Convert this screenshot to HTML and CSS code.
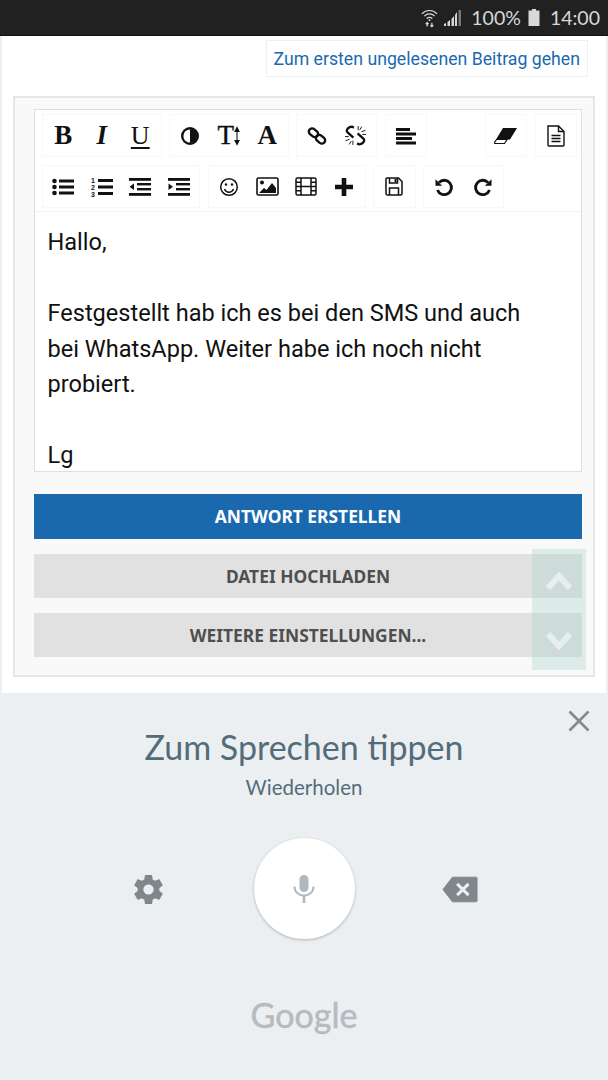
FILE: index.html
```html
<!DOCTYPE html>
<html lang="de">
<head>
    <meta charset="UTF-8">
    <meta name="viewport" content="width=device-width, initial-scale=1.0">
    <title>Antwort erstellen</title>
    <link rel="stylesheet" href="styles.css">
</head>
<body>
    <div class="status-bar">
        <svg class="wifi-icon" width="17" height="20" viewBox="0 0 18 20" fill="none" stroke="#d8d8d8" stroke-width="1.3">
            <path d="M1 5.5c4.5-4.6 11.5-4.6 16 0"/>
            <path d="M3.5 8c3.2-3 7.8-3 11 0"/>
            <path d="M6 10.5c1.8-1.5 4.2-1.5 6 0"/>
            <circle cx="9" cy="12.3" r="1" fill="#d8d8d8" stroke="none"/>
            <path d="M6.5 19v-4M5 16.3l1.5-1.5 1.5 1.500M11.5 15v4M10 17.7l1.5 1.5 1.5-1.5"/>
        </svg>
        <svg class="signal-icon" width="17" height="16" viewBox="0 0 17 16" fill="#d8d8d8">
            <path d="M0 16v-2l2-1v3z"/>
            <path d="M3.5 16v-4l2.5-2v6z"/>
            <path d="M7.5 16V9l2.5-3v10z"/>
            <path d="M11 16V5l2-3v14z"/>
            <rect x="14.5" y="0" width="2.5" height="16" fill="#777"/>
        </svg>
        <span class="status-battery-text">100%</span>
        <svg class="battery-icon" width="12" height="17" viewBox="0 0 11 17" fill="#d8d8d8">
            <path d="M3.5 0h4v1.5H11V17H0V1.5h3.5z"/>
        </svg>
        <span class="status-time">14:00</span>
    </div>

    <div class="page">
        <div class="first-unread">
            <a class="first-unread-link">Zum ersten ungelesenen Beitrag gehen</a>
        </div>

        <div class="reply-panel">
            <div class="editor">
                <div class="toolbar">
                    <div class="toolbar-row">
                        <div class="tool-group">
                            <span class="tool tool-letter bold">B</span>
                            <span class="tool tool-letter italic">I</span>
                            <span class="tool tool-letter underline">U</span>
                        </div>
                        <div class="tool-group">
                            <span class="tool">
                                <svg width="20" height="20" viewBox="0 0 20 20"><circle cx="10" cy="10" r="7.8" fill="none" stroke="#111" stroke-width="2.4"/><path d="M10 3a7 7 0 0 1 0 14z" fill="#111"/></svg>
                            </span>
                            <span class="tool tool-letter size-letter">T<svg width="6" height="20" viewBox="0 0 6 20" fill="none" stroke="#111" stroke-width="1.1"><path d="M3 3v14"/><path d="M1 5.5L3 1.5 5 5.5zM1 14.5L3 18.5 5 14.5z" fill="#111"/></svg></span>
                            <span class="tool tool-letter bold">A</span>
                        </div>
                        <div class="tool-group">
                            <span class="tool">
                                <svg width="20" height="20" viewBox="0 0 20 20" fill="none" stroke="#111" stroke-width="2.4"><rect x="1.5" y="3.5" width="10" height="6.5" rx="3.2" transform="rotate(40 6.5 6.7)"/><rect x="8.5" y="10" width="10" height="6.5" rx="3.2" transform="rotate(40 13.5 13.3)"/></svg>
                            </span>
                            <span class="tool">
                                <svg width="21" height="21" viewBox="0 0 20 20" fill="none" stroke="#111" stroke-width="2.2"><path d="M8.5 2.5L6.5 1.5Q4.5 1.5 2.5 3.5 1 5.5 2.5 7L8 12"/><path d="M12 8L17.5 13Q19 14.5 17.5 16.5 15.5 18.5 13.5 18.5L11.5 17.5"/><path stroke-width="0.9" d="M12.5 1v4M16 1.5l-2 3.2M19.5 5l-3.800 1.500M20 9h-3.500M0 11h3.500M.5 15l3.800-1.500M4 18.500l2-3.200M7.500 19v-4"/></svg>
                            </span>
                        </div>
                        <div class="tool-group">
                            <span class="tool">
                                <svg width="22" height="20" viewBox="0 0 22 20" fill="#111"><rect x="1" y="2" width="14" height="3"/><rect x="1" y="6.5" width="20" height="3"/><rect x="1" y="11" width="16" height="3"/><rect x="1" y="15.5" width="20" height="3"/></svg>
                            </span>
                        </div>
                        <div class="tool-group push-right">
                            <span class="tool">
                                <svg width="24" height="18" viewBox="0 0 24 18"><path d="M9 1h14l-7 11.5H2z" fill="#111"/><path d="M2.6 12.5h10.500L10.500 16.500H1.200c-.8 0-1-.6-.6-1.200z" fill="#fff" stroke="#111" stroke-width="1.2"/></svg>
                            </span>
                        </div>
                        <div class="tool-group">
                            <span class="tool">
                                <svg width="18" height="22" viewBox="0 0 18 22" fill="none" stroke="#111" stroke-width="1.4"><path d="M1 1h10.5L17 6.5V20c0 .6-.4 1-1 1H2c-.6 0-1-.4-1-1z"/><path d="M11.5 1v5.5H17M4.5 10.5h9M4.5 13.5h9M4.5 16.5h9"/></svg>
                            </span>
                        </div>
                    </div>
                    <div class="toolbar-row">
                        <div class="tool-group">
                            <span class="tool">
                                <svg width="22" height="18" viewBox="0 0 22 18" fill="#111"><circle cx="2.5" cy="3" r="2.3"/><circle cx="2.5" cy="9" r="2.3"/><circle cx="2.5" cy="15" r="2.3"/><rect x="7" y="1.5" width="15" height="3"/><rect x="7" y="7.5" width="15" height="3"/><rect x="7" y="13.5" width="15" height="3"/></svg>
                            </span>
                            <span class="tool">
                                <svg width="22" height="20" viewBox="0 0 22 20" fill="#111"><text class="list-digit" x="0" y="6">1</text><text class="list-digit" x="0" y="13">2</text><text class="list-digit" x="0" y="20">3</text><rect x="7" y="2" width="15" height="3"/><rect x="7" y="8.5" width="15" height="3"/><rect x="7" y="15" width="15" height="3"/></svg>
                            </span>
                            <span class="tool">
                                <svg width="22" height="18" viewBox="0 0 22 18" fill="#111"><rect x="0" y="0" width="22" height="2.8"/><rect x="8" y="5" width="14" height="2.4"/><rect x="8" y="10" width="14" height="2.4"/><rect x="0" y="15" width="22" height="2.8"/><path d="M5 5.5V12L.5 8.8z"/></svg>
                            </span>
                            <span class="tool">
                                <svg width="22" height="18" viewBox="0 0 22 18" fill="#111"><rect x="0" y="0" width="22" height="2.8"/><rect x="8" y="5" width="14" height="2.4"/><rect x="8" y="10" width="14" height="2.4"/><rect x="0" y="15" width="22" height="2.8"/><path d="M.5 5.5V12L5 8.8z"/></svg>
                            </span>
                        </div>
                        <div class="tool-group">
                            <span class="tool">
                                <svg width="20" height="20" viewBox="0 0 20 20" fill="none" stroke="#111" stroke-width="1.5"><circle cx="10" cy="10" r="8.3"/><path d="M5.5 12c1 2.3 2.7 3.3 4.5 3.3s3.500-1 4.500-3.300"/><circle cx="7" cy="7.5" r="1.2" fill="#111" stroke="none"/><circle cx="13" cy="7.5" r="1.2" fill="#111" stroke="none"/></svg>
                            </span>
                            <span class="tool">
                                <svg width="23" height="19" viewBox="0 0 23 19"><rect x="1" y="1" width="21" height="17" rx="1.5" fill="none" stroke="#111" stroke-width="1.6"/><circle cx="6" cy="5.5" r="2" fill="#111"/><path d="M3 16l5-5 2.5 2 5.5-7 4 5v5z" fill="#111"/></svg>
                            </span>
                            <span class="tool">
                                <svg width="22" height="19" viewBox="0 0 22 19" fill="none" stroke="#111" stroke-width="1.5"><rect x="1" y="1" width="20" height="17" rx="1.5"/><path d="M6 1v17M16 1v17M6 9.5h10M1 5.3h5M1 9.5h5M1 13.7h5M16 5.3h5M16 9.5h5M16 13.7h5"/></svg>
                            </span>
                            <span class="tool">
                                <svg width="18" height="18" viewBox="0 0 18 18" fill="#111"><path d="M6.7 0h4.600v6.700H18v4.600h-6.700V18H6.700v-6.700H0V6.700h6.700z"/></svg>
                            </span>
                        </div>
                        <div class="tool-group">
                            <span class="tool">
                                <svg width="18" height="19" viewBox="0 0 18 19" fill="none" stroke="#111" stroke-width="1.5"><path d="M1.8 1H13.5L17 4.5V16.5c0 .8-.6 1.500-1.400 1.500H2.400C1.600 18 1 17.300 1 16.500V1.800z"/><path d="M4.5 18v-7h9v7"/><path d="M4.5 1v5h8V1"/><rect x="9.5" y="2" width="2" height="3" fill="#111" stroke="none"/></svg>
                            </span>
                        </div>
                        <div class="tool-group">
                            <span class="tool">
                                <svg width="20" height="20" viewBox="0 0 20 20" fill="none" stroke="#111" stroke-width="2.8"><path d="M5 5.5a7.2 7.2 0 1 1-1.500 7.500"/><path d="M1.5 2.2v6.600h6.600z" fill="#111" stroke="none"/></svg>
                            </span>
                            <span class="tool">
                                <svg width="20" height="20" viewBox="0 0 20 20" fill="none" stroke="#111" stroke-width="2.8"><path d="M15 5.5a7.2 7.2 0 1 0 1.500 7.500"/><path d="M18.5 2.2v6.600h-6.600z" fill="#111" stroke="none"/></svg>
                            </span>
                        </div>
                    </div>
                </div>
                <div class="editor-text">
                    Hallo,<br>
                    <br>
                    Festgestellt hab ich es bei den SMS und auch<br>
                    bei WhatsApp. Weiter habe ich noch nicht<br>
                    probiert.<br>
                    <br>
                    Lg
                </div>
            </div>

            <div class="btn btn-primary">ANTWORT ERSTELLEN</div>
            <div class="btn btn-secondary">DATEI HOCHLADEN</div>
            <div class="btn btn-secondary">WEITERE EINSTELLUNGEN...</div>
        </div>

        <div class="scroll-arrows">
            <svg width="28" height="18" viewBox="0 0 28 18" fill="none" stroke="#e8eeed" stroke-width="6"><path d="M3 16L14 4l11 12"/></svg>
            <svg width="28" height="18" viewBox="0 0 28 18" fill="none" stroke="#e8eeed" stroke-width="6"><path d="M3 2l11 12L25 2"/></svg>
        </div>
    </div>

    <div class="voice-panel">
        <svg class="voice-close" width="22" height="22" viewBox="0 0 22 22" stroke="#83898d" stroke-width="2.6"><path d="M1.5 1.5l19 19M20.5 1.5l-19 19"/></svg>
        <div class="voice-title">Zum Sprechen tippen</div>
        <div class="voice-sub">Wiederholen</div>
        <div class="voice-controls">
            <svg class="voice-side" width="35" height="35" viewBox="0 0 24 24" fill="#7f878b">
                <path fill-rule="evenodd" d="M19.43 12.98c.04-.32.07-.64.07-.98s-.03-.66-.07-.98l2.11-1.65c.19-.15.24-.42.12-.64l-2-3.46c-.12-.22-.39-.3-.61-.22l-2.49 1c-.52-.4-1.08-.73-1.69-.98l-.38-2.65C14.46 2.18 14.25 2 14 2h-4c-.25 0-.46.18-.49.42l-.38 2.65c-.61.25-1.17.59-1.69.98l-2.49-1c-.23-.09-.49 0-.61.22l-2 3.46c-.13.22-.07.49.12.64l2.11 1.65c-.04.32-.07.65-.07.98s.03.66.07.98l-2.11 1.65c-.19.15-.24.42-.12.64l2 3.46c.12.22.39.3.61.22l2.49-1c.52.4 1.08.73 1.69.98l.38 2.65c.03.24.24.42.49.42h4c.25 0 .46-.18.49-.42l.38-2.65c.61-.25 1.17-.59 1.69-.98l2.49 1c.23.09.49 0 .61-.22l2-3.46c.12-.22.07-.49-.12-.64l-2.11-1.65zM12 15.5c-1.93 0-3.5-1.57-3.5-3.5s1.57-3.5 3.5-3.5 3.5 1.57 3.5 3.5-1.57 3.5-3.5 3.5z"/>
            </svg>
            <div class="mic-button">
                <svg width="24" height="30" viewBox="0 0 24 30" fill="none">
                    <rect x="7.5" y="1" width="9" height="17" rx="4.5" fill="#adbac1"/>
                    <path d="M2.5 12.5c0 5.5 4 9 9.5 9s9.5-3.5 9.5-9" stroke="#adbac1" stroke-width="2"/>
                    <path d="M12 21v8" stroke="#adbac1" stroke-width="2.6"/>
                </svg>
            </div>
            <svg class="voice-side" width="36" height="27" viewBox="0 0 38 28">
                <path d="M11 1h25c.6 0 1 .4 1 1v24c0 .6-.4 1-1 1H11L1 14z" fill="#7f878b" stroke="#7f878b" stroke-width="1" stroke-linejoin="round"/>
                <path d="M16 8l12 12M28 8L16 20" stroke="#eceff2" stroke-width="3.2"/>
            </svg>
        </div>
        <div class="voice-brand">Google</div>
    </div>
</body>
</html>
```

FILE: styles.css
```css
/* Base styles */
body {
    font-family: 'Roboto', 'Liberation Sans', sans-serif;
    background-color: #fff;
    color: #111;
    margin: 0;
    width: 608px;
    height: 1080px;
    overflow: hidden;
}

/* Status bar */
.status-bar {
    height: 36px;
    box-sizing: border-box;
    background-color: #212121;
    border-bottom: 1px solid #111;
    color: #d8d8d8;
    font-family: 'Lato', sans-serif;
    font-size: 19.5px;
    display: flex;
    align-items: center;
    justify-content: flex-end;
    padding-right: 8px;
}

.wifi-icon {
    margin-right: 6px;
}

.signal-icon {
    margin-right: 10px;
}

.status-battery-text {
    margin-right: 7px;
}

.battery-icon {
    margin-right: 10px;
}

/* Page content */
.page {
    position: relative;
    height: 657px;
    box-sizing: border-box;
    border-left: 2px solid #eee;
    border-right: 2px solid #eee;
    padding: 4px 11px 0;
}

.first-unread {
    display: flex;
    justify-content: flex-end;
    margin-right: 7px;
}

.first-unread-link {
    height: 37px;
    box-sizing: border-box;
    border: 1px solid #ecf1f4;
    color: #1a69af;
    font-size: 17.7px;
    line-height: 37px;
    padding: 0 7px;
}

.reply-panel {
    margin-top: 19px;
    height: 581px;
    box-sizing: border-box;
    background-color: #f9f9f9;
    border: 2px solid #e6e6e6;
    padding: 11px 11px 0 19px;
}

.editor {
    height: 363px;
    box-sizing: border-box;
    background-color: #fff;
    border: 1px solid #dfdfdf;
    overflow: hidden;
}

.toolbar {
    height: 102px;
    box-sizing: border-box;
    border-bottom: 1px solid #f3f3f3;
    padding: 4px 4px 0 7px;
    display: flex;
    flex-direction: column;
    gap: 8px;
}

.toolbar-row {
    display: flex;
    gap: 7.5px;
}

.tool-group {
    height: 43px;
    box-sizing: border-box;
    border: 1px solid #f8f8f8;
    padding: 0 1px;
    display: flex;
}

.push-right {
    margin-left: auto;
}

.tool {
    width: 38.5px;
    display: flex;
    align-items: center;
    justify-content: center;
}

.tool-letter {
    font-family: 'Liberation Serif', serif;
    font-size: 27px;
    color: #111;
}

.bold {
    font-weight: bold;
}

.italic {
    font-style: italic;
    font-weight: bold;
}

.underline {
    text-decoration: underline;
    text-decoration-thickness: 2px;
    text-underline-offset: 3px;
    font-size: 26px;
}

.size-letter {
    -webkit-text-stroke: 0.4px #111;
}

.list-digit {
    font-family: 'Liberation Sans', sans-serif;
    font-size: 7px;
    font-weight: bold;
}

.editor-text {
    font-size: 23.55px;
    line-height: 35.5px;
    padding: 13px 12.5px 0;
    white-space: nowrap;
}

/* Buttons */
.btn {
    height: 44px;
    font-family: 'Noto Sans', sans-serif;
    font-size: 17.4px;
    font-weight: bold;
    line-height: 44px;
    text-align: center;
}

.btn-primary {
    margin-top: 22px;
    height: 45px;
    line-height: 45px;
    background-color: #1a69af;
    color: #fff;
}

.btn-secondary {
    margin-top: 15px;
    background-color: #e1e1e1;
    color: #4f4f4f;
}

/* Floating scroll arrows */
.scroll-arrows {
    position: absolute;
    left: 530px;
    top: 513px;
    width: 54px;
    height: 121px;
    background-color: rgba(165, 205, 200, 0.33);
    display: flex;
    flex-direction: column;
    align-items: center;
    justify-content: space-between;
    box-sizing: border-box;
    padding: 23px 0 20px;
}

/* Voice input panel */
.voice-panel {
    position: relative;
    height: 387px;
    background-color: #eceff2;
    display: flex;
    flex-direction: column;
    align-items: center;
}

.voice-close {
    position: absolute;
    right: 18px;
    top: 17px;
}

.voice-title {
    margin-top: 32px;
    font-family: 'Lato', sans-serif;
    font-size: 34px;
    line-height: 44px;
    color: #536c7a;
}

.voice-sub {
    margin-top: 5px;
    font-family: 'Lato', sans-serif;
    font-size: 20.5px;
    line-height: 26px;
    color: #536c7a;
}

.voice-controls {
    margin-top: 38px;
    display: grid;
    grid-template-columns: repeat(3, 156px);
    justify-items: center;
    align-items: center;
}

.voice-side {
    margin-top: 2px;
}

.mic-button {
    width: 101px;
    height: 101px;
    border-radius: 50%;
    background-color: #fff;
    box-shadow: 0 1px 3px rgba(0, 0, 0, 0.25);
    display: flex;
    align-items: center;
    justify-content: center;
}

.voice-brand {
    margin-top: 53px;
    font-family: 'Lato', sans-serif;
    font-size: 34px;
    line-height: 46px;
    color: #b6bbbe;
    -webkit-text-stroke: 0.5px #b6bbbe;
}
```
